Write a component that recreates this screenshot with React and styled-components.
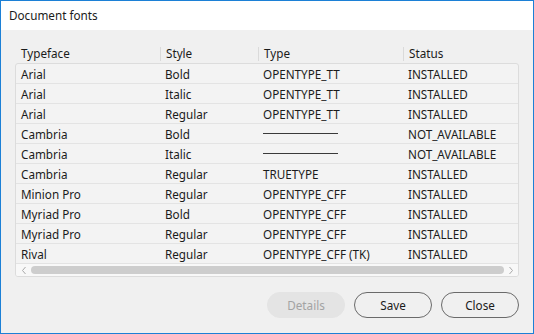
import React from 'react';
import styled, { createGlobalStyle } from 'styled-components';

const GlobalStyle = createGlobalStyle`
  html, body {
    margin: 0;
    padding: 0;
    background: #f0f0f0;
  }
  * {
    box-sizing: border-box;
  }
`;

const fonts = [
  { face: 'Arial', style: 'Bold', type: 'OPENTYPE_TT', status: 'INSTALLED' },
  { face: 'Arial', style: 'Italic', type: 'OPENTYPE_TT', status: 'INSTALLED' },
  { face: 'Arial', style: 'Regular', type: 'OPENTYPE_TT', status: 'INSTALLED' },
  { face: 'Cambria', style: 'Bold', type: null, status: 'NOT_AVAILABLE' },
  { face: 'Cambria', style: 'Italic', type: null, status: 'NOT_AVAILABLE' },
  { face: 'Cambria', style: 'Regular', type: 'TRUETYPE', status: 'INSTALLED' },
  { face: 'Minion Pro', style: 'Regular', type: 'OPENTYPE_CFF', status: 'INSTALLED' },
  { face: 'Myriad Pro', style: 'Bold', type: 'OPENTYPE_CFF', status: 'INSTALLED' },
  { face: 'Myriad Pro', style: 'Regular', type: 'OPENTYPE_CFF', status: 'INSTALLED' },
  { face: 'Rival', style: 'Regular', type: 'OPENTYPE_CFF (TK)', status: 'INSTALLED' },
];

// small scroll arrow chevron
function Chevron({ dir }) {
  const d = dir === 'left' ? 'M4.5 1 L1.5 4.5 L4.5 8' : 'M1.5 1 L4.5 4.5 L1.5 8';
  return (
    <ArrowBox>
      <svg width="6" height="9" viewBox="0 0 6 9">
        <path d={d} fill="none" stroke="#a8a8a8" strokeWidth="1" />
      </svg>
    </ArrowBox>
  );
}

export default function App() {
  return (
    <>
      <GlobalStyle />
      <Window>
        <TitleBar>Document fonts</TitleBar>
        <Content>
          <HeaderRow>
            <HeadCell>Typeface</HeadCell>
            <HeadCell divider>Style</HeadCell>
            <HeadCell divider>Type</HeadCell>
            <HeadCell divider>Status</HeadCell>
          </HeaderRow>
          <TableBox>
            {fonts.map((f, i) => (
              <Row key={i}>
                <Cell>{f.face}</Cell>
                <Cell>{f.style}</Cell>
                <Cell>{f.type ? f.type : <Dash />}</Cell>
                <Cell>{f.status}</Cell>
              </Row>
            ))}
            <ScrollBar>
              <Chevron dir="left" />
              <Thumb />
              <Chevron dir="right" />
            </ScrollBar>
          </TableBox>
        </Content>
        <Footer>
          <Button disabled>Details</Button>
          <Button>Save</Button>
          <Button>Close</Button>
        </Footer>
      </Window>
    </>
  );
}

const Window = styled.div`
  width: 534px;
  height: 334px;
  border: 1px solid #1c80d6;
  background: #f0f0f0;
  display: flex;
  flex-direction: column;
  font-family: 'Noto Sans', 'Open Sans', sans-serif;
  font-size: 11.7px;
  color: #1b1b1b;
`;

const TitleBar = styled.div`
  height: 29px;
  background: #ffffff;
  display: flex;
  align-items: center;
  padding-left: 8px;
  padding-bottom: 1px;
`;

const Content = styled.div`
  padding: 14px 14px 0 14px;
`;

const HeaderRow = styled.div`
  display: grid;
  grid-template-columns: 145px 98px 145px 1fr;
  height: 19px;
`;

const HeadCell = styled.div`
  position: relative;
  display: flex;
  align-items: center;
  padding-left: 6px;
  padding-bottom: 1px;
  &::before {
    content: '';
    display: ${(p) => (p.divider ? 'block' : 'none')};
    position: absolute;
    left: 0;
    top: 3px;
    bottom: 2px;
    width: 1px;
    background: #dadada;
  }
`;

const TableBox = styled.div`
  border: 1px solid #dcdcdc;
  border-radius: 3px;
  background: #f3f3f3;
  overflow: hidden;
`;

const Row = styled.div`
  display: grid;
  grid-template-columns: 144px 98px 145px 1fr;
  height: 20px;
  border-bottom: 1px solid #e3e3e3;
`;

const Cell = styled.div`
  display: flex;
  align-items: center;
  padding-left: 5px;
  white-space: nowrap;
`;

const Dash = styled.span`
  display: block;
  width: 75px;
  height: 1px;
  background: #3a3a3a;
`;

const ScrollBar = styled.div`
  display: flex;
  align-items: center;
  height: 12px;
  background: #f8f8f8;
  padding: 0 3px 0 4px;
`;

const ArrowBox = styled.span`
  display: flex;
  align-items: center;
  justify-content: center;
  width: 8px;
  height: 12px;
`;

const Thumb = styled.div`
  flex: 1;
  height: 8px;
  margin: 0 3px;
  border-radius: 4px;
  background: #cdcdcd;
`;

const Footer = styled.div`
  display: flex;
  justify-content: flex-end;
  gap: 9px;
  padding: 15px 14px 0 0;
`;

const Button = styled.button`
  width: 78px;
  height: 26px;
  border-radius: 13px;
  font-family: inherit;
  font-size: 11.7px;
  padding: 0;
  color: ${(p) => (p.disabled ? '#a3a3a3' : '#1b1b1b')};
  background: ${(p) => (p.disabled ? '#e4e4e4' : 'transparent')};
  border: 1px solid ${(p) => (p.disabled ? '#e4e4e4' : '#6a6a6a')};
`;
